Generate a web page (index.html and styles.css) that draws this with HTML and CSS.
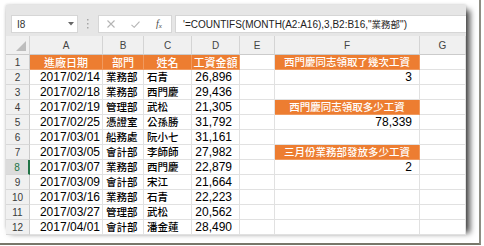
FILE: index.html
```html
<!DOCTYPE html>
<html lang="zh-Hant">
<head>
<meta charset="utf-8">
<title>COUNTIFS</title>
<link rel="stylesheet" href="styles.css">
</head>
<body>
<div class="page">
  <div class="shot">
    <div class="fbar">
      <div class="namebox"><span>I8</span>
        <svg width="6" height="4" viewBox="0 0 6 4"><path d="M0 0H6L3 3.5Z" fill="#666"/></svg>
      </div>
      <div class="sep">
        <svg width="2" height="10" viewBox="0 0 2 10"><rect x="0" y="0" width="1.5" height="1.5" fill="#a6a6a6"/><rect x="0" y="4" width="1.5" height="1.5" fill="#a6a6a6"/><rect x="0" y="8" width="1.5" height="1.5" fill="#a6a6a6"/></svg>
      </div>
      <div class="btns">
        <div class="btn"><svg width="8" height="8" viewBox="0 0 8 8"><path d="M0.5 0.5L7.5 7.5M7.5 0.5L0.5 7.5" stroke="#b4b4b4" stroke-width="1.1" fill="none"/></svg></div>
        <div class="btn"><svg width="9" height="7" viewBox="0 0 9 7"><path d="M0.5 3.8L3.2 6.3L8.5 0.6" stroke="#b4b4b4" stroke-width="1.1" fill="none"/></svg></div>
        <div class="btn"><span class="fx">f<span class="fxs">x</span></span></div>
      </div>
      <div class="formula"><span>'=COUNTIFS(MONTH(A2:A16),3,B2:B16,"</span><span class="fcj">業務部</span><span>")</span></div>
    </div>
    <div class="sheet">
      <div class="ch corner"><svg width="10" height="10" viewBox="0 0 10 10"><path d="M10 0V10H0Z" fill="#bdbdbd"/></svg></div>
      <div class="ch">A</div><div class="ch">B</div><div class="ch">C</div><div class="ch">D</div><div class="ch">E</div><div class="ch">F</div><div class="ch">G</div>

      <div class="rh">1</div><div class="o">進廠日期</div><div class="o">部門</div><div class="o">姓名</div><div class="o">工資金額</div><div></div><div class="o q">西門慶同志領取了幾次工資</div><div></div>

      <div class="rh">2</div><div class="n">2017/02/14</div><div class="t">業務部</div><div class="t">石青</div><div class="n m">26,896</div><div></div><div class="n m">3</div><div></div>

      <div class="rh">3</div><div class="n">2017/02/18</div><div class="t">業務部</div><div class="t">西門慶</div><div class="n m">29,436</div><div></div><div></div><div></div>

      <div class="rh">4</div><div class="n">2017/02/19</div><div class="t">管理部</div><div class="t">武松</div><div class="n m">21,305</div><div></div><div class="o q">西門慶同志領取多少工資</div><div></div>

      <div class="rh">5</div><div class="n">2017/02/25</div><div class="t">憑證室</div><div class="t">公孫勝</div><div class="n m">31,792</div><div></div><div class="n m">78,339</div><div></div>

      <div class="rh">6</div><div class="n">2017/03/01</div><div class="t">船務處</div><div class="t">阮小七</div><div class="n m">31,161</div><div></div><div></div><div></div>

      <div class="rh">7</div><div class="n">2017/03/05</div><div class="t">會計部</div><div class="t">李師師</div><div class="n m">27,982</div><div></div><div class="o q">三月份業務部發放多少工資</div><div></div>

      <div class="rh sel">8</div><div class="n">2017/03/07</div><div class="t">業務部</div><div class="t">西門慶</div><div class="n m">22,879</div><div></div><div class="n m">2</div><div></div>

      <div class="rh">9</div><div class="n">2017/03/09</div><div class="t">會計部</div><div class="t">宋江</div><div class="n m">21,664</div><div></div><div></div><div></div>

      <div class="rh">10</div><div class="n">2017/03/16</div><div class="t">業務部</div><div class="t">石青</div><div class="n m">22,223</div><div></div><div></div><div></div>

      <div class="rh">11</div><div class="n">2017/03/27</div><div class="t">管理部</div><div class="t">武松</div><div class="n m">20,562</div><div></div><div></div><div></div>

      <div class="rh">12</div><div class="n">2017/04/01</div><div class="t">會計部</div><div class="t">潘金蓮</div><div class="n m">28,490</div><div></div><div></div><div></div>
    </div>
  </div>
</div>
</body>
</html>
```
FILE: styles.css
```css
html, body {
  margin: 0;
  padding: 0;
  background: #ffffff;
}

.page {
  width: 481px;
  height: 245px;
  box-sizing: border-box;
  padding: 5px 0 0 6px;
  border-right: 2px solid #8e8d83;
  border-bottom: 2px solid #78776a;
  background: #ffffff;
}

.shot {
  width: 460px;
  height: 223px;
  background: #e6e6e6;
  display: flex;
  flex-direction: column;
  box-shadow: 0 0 3px rgba(0, 0, 0, 0.22), 4px 5px 6px rgba(0, 0, 0, 0.7);
}

.fbar {
  height: 31px;
  flex: none;
  box-sizing: border-box;
  padding: 10px 0 0 5px;
  display: flex;
  align-items: flex-start;
}

.namebox {
  width: 67px;
  height: 18px;
  box-sizing: border-box;
  background: #ffffff;
  border: 1px solid #d6d6d6;
  display: flex;
  align-items: center;
  justify-content: space-between;
  padding: 0 3px 0 5px;
  font: 10px "Liberation Sans", sans-serif;
  color: #333333;
}

.sep {
  width: 20px;
  height: 18px;
  display: flex;
  align-items: center;
  justify-content: center;
}

.btns {
  width: 74px;
  height: 18px;
  box-sizing: border-box;
  background: #ffffff;
  border: 1px solid #d6d6d6;
  display: flex;
  padding: 0;
}

.btn {
  width: 24px;
  display: flex;
  align-items: center;
  justify-content: center;
}

.fx {
  font: italic 10px "Liberation Serif", serif;
  color: #4a4a4a;
  line-height: 10px;
}

.fxs {
  font-size: 7px;
  position: relative;
  top: 1px;
}

.formula {
  flex: 1;
  margin-left: 3px;
  height: 18px;
  box-sizing: border-box;
  background: #ffffff;
  border: 1px solid #d6d6d6;
  border-right: none;
  padding-left: 7px;
  display: flex;
  align-items: center;
  white-space: nowrap;
  overflow: hidden;
  font: 10px "Liberation Sans", sans-serif;
  color: #222222;
}

.fcj {
  font-family: "Noto Sans CJK TC", sans-serif;
  font-size: 9.5px;
}

.sheet {
  flex: 1;
  display: grid;
  grid-template-columns: 24px 73px 41px 48px 48px 35px 145px 46px;
  grid-template-rows: 19px repeat(12, 1fr);
  background: #ffffff;
}

.sheet > div {
  box-sizing: border-box;
  border-right: 1px solid #e1e1e1;
  border-bottom: 1px solid #e1e1e1;
  display: flex;
  align-items: center;
  overflow: hidden;
  white-space: nowrap;
  min-width: 0;
  line-height: 14px;
}

.sheet > .ch {
  background: #f0f0f0;
  border-right: 1px solid #d4d4d4;
  border-bottom: 1px solid #cbcbcb;
  justify-content: center;
  font: 10px "Liberation Sans", sans-serif;
  color: #444444;
  padding-top: 1px;
}

.sheet > .corner {
  justify-content: flex-end;
  align-items: flex-end;
  padding: 0 3px 3px 0;
}

.sheet > .rh {
  background: #f0f0f0;
  border-right: 1px solid #cbcbcb;
  border-bottom: 1px solid #d8d8d8;
  justify-content: center;
  font: 10px "Liberation Sans", sans-serif;
  color: #3a3a3a;
}

.sheet > .sel {
  background: #dcdcdc;
  color: #217346;
  border-right: 2px solid #217346;
}

.sheet > .n {
  justify-content: flex-end;
  padding-right: 2px;
  font: 12px "Liberation Sans", sans-serif;
  color: #000000;
}

.sheet > .m {
  padding-right: 7px;
}

.sheet > .t {
  padding-left: 3px;
  font: 500 10.5px "Noto Sans CJK TC", sans-serif;
  line-height: 14px;
  color: #000000;
}

.sheet > .o {
  background: #ed7d31;
  border-right-color: #f09a5f;
  border-bottom-color: #f09a5f;
  justify-content: center;
  font: 500 11px "Noto Sans CJK TC", sans-serif;
  line-height: 14px;
  color: #ffffff;
}

.sheet > .q {
  font-size: 10.5px;
}
```
